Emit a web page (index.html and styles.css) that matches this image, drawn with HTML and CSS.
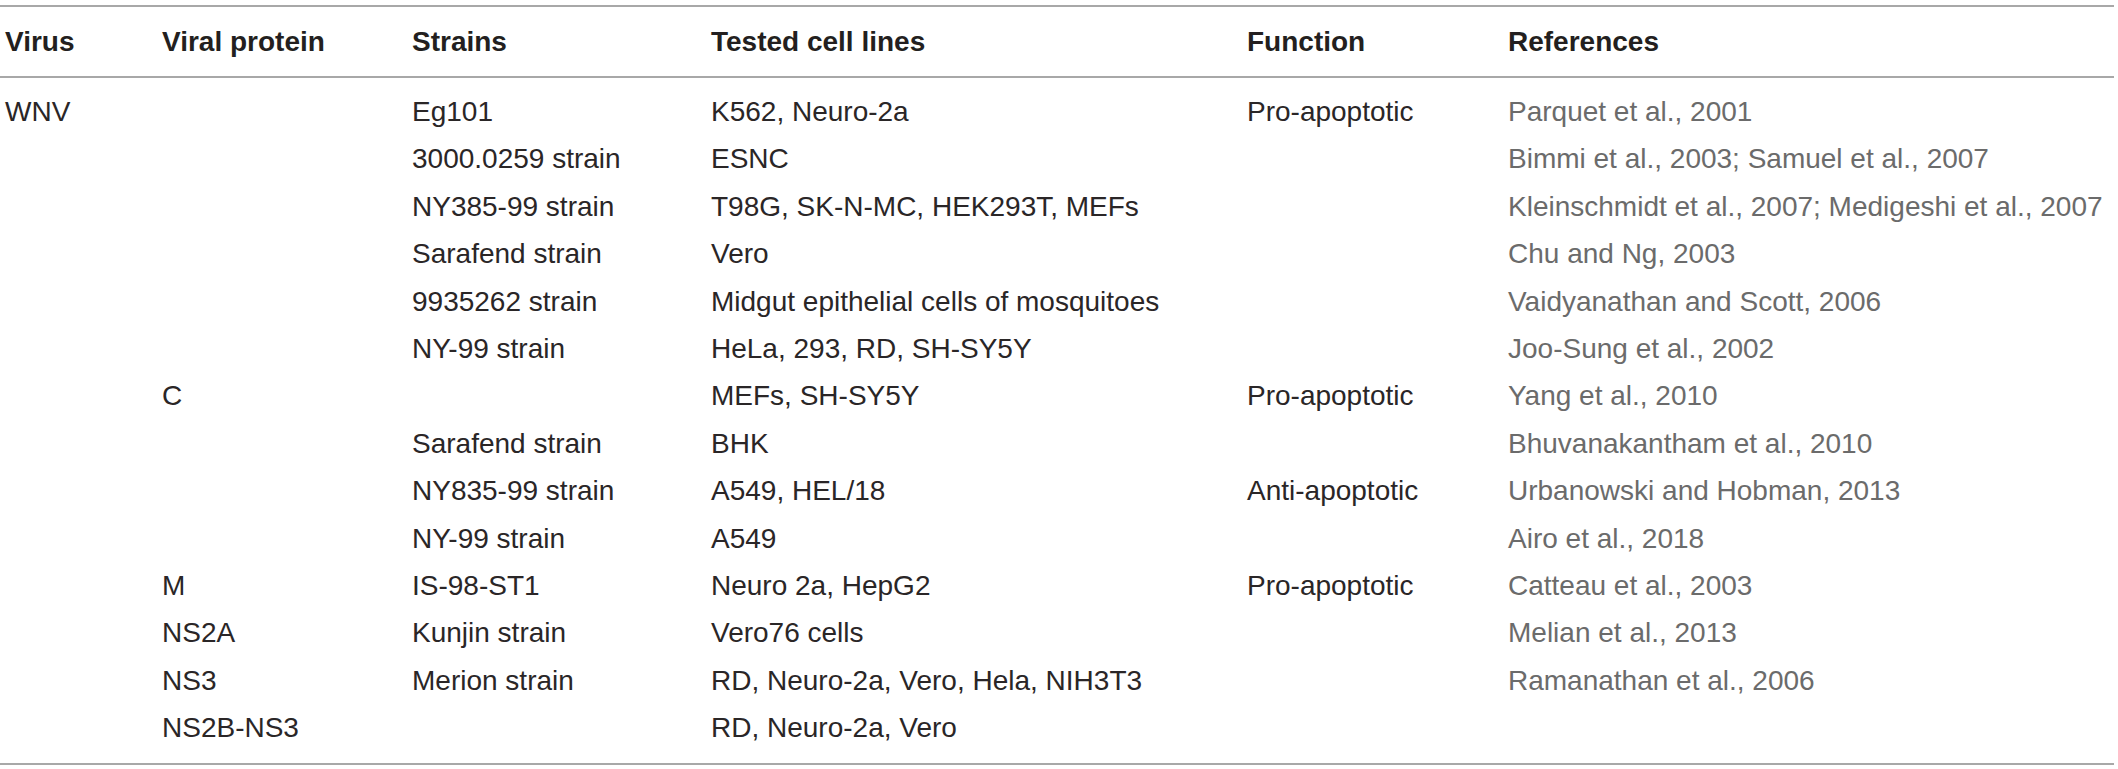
FILE: index.html
```html
<!DOCTYPE html>
<html>
<head>
<meta charset="utf-8">
<link rel="stylesheet" href="styles.css">
</head>
<body>
<table class="tbl">
  <colgroup>
    <col class="c1"><col class="c2"><col class="c3"><col class="c4"><col class="c5"><col class="c6">
  </colgroup>
  <thead>
    <tr><th>Virus</th><th>Viral protein</th><th>Strains</th><th>Tested cell lines</th><th>Function</th><th>References</th></tr>
  </thead>
  <tbody>
    <tr class="first"><td>WNV</td><td></td><td>Eg101</td><td>K562, Neuro-2a</td><td>Pro-apoptotic</td><td class="ref">Parquet et al., 2001</td></tr>
    <tr><td></td><td></td><td>3000.0259 strain</td><td>ESNC</td><td></td><td class="ref">Bimmi et al., 2003; Samuel et al., 2007</td></tr>
    <tr><td></td><td></td><td>NY385-99 strain</td><td>T98G, SK-N-MC, HEK293T, MEFs</td><td></td><td class="ref">Kleinschmidt et al., 2007; Medigeshi et al., 2007</td></tr>
    <tr><td></td><td></td><td>Sarafend strain</td><td>Vero</td><td></td><td class="ref">Chu and Ng, 2003</td></tr>
    <tr><td></td><td></td><td>9935262 strain</td><td>Midgut epithelial cells of mosquitoes</td><td></td><td class="ref">Vaidyanathan and Scott, 2006</td></tr>
    <tr><td></td><td></td><td>NY-99 strain</td><td>HeLa, 293, RD, SH-SY5Y</td><td></td><td class="ref">Joo-Sung et al., 2002</td></tr>
    <tr><td></td><td>C</td><td></td><td>MEFs, SH-SY5Y</td><td>Pro-apoptotic</td><td class="ref">Yang et al., 2010</td></tr>
    <tr><td></td><td></td><td>Sarafend strain</td><td>BHK</td><td></td><td class="ref">Bhuvanakantham et al., 2010</td></tr>
    <tr><td></td><td></td><td>NY835-99 strain</td><td>A549, HEL/18</td><td>Anti-apoptotic</td><td class="ref">Urbanowski and Hobman, 2013</td></tr>
    <tr><td></td><td></td><td>NY-99 strain</td><td>A549</td><td></td><td class="ref">Airo et al., 2018</td></tr>
    <tr><td></td><td>M</td><td>IS-98-ST1</td><td>Neuro 2a, HepG2</td><td>Pro-apoptotic</td><td class="ref">Catteau et al., 2003</td></tr>
    <tr><td></td><td>NS2A</td><td>Kunjin strain</td><td>Vero76 cells</td><td></td><td class="ref">Melian et al., 2013</td></tr>
    <tr><td></td><td>NS3</td><td>Merion strain</td><td>RD, Neuro-2a, Vero, Hela, NIH3T3</td><td></td><td class="ref">Ramanathan et al., 2006</td></tr>
    <tr class="last"><td></td><td>NS2B-NS3</td><td></td><td>RD, Neuro-2a, Vero</td><td></td><td class="ref"></td></tr>
  </tbody>
</table>
</body>
</html>
```
FILE: styles.css
```css
html, body {
  margin: 0;
  padding: 0;
  background: #ffffff;
}
body {
  padding-top: 5px;
  font-family: "Liberation Sans", Arial, sans-serif;
  color: #231f20;
}
.tbl {
  width: 2114px;
  border-collapse: collapse;
  table-layout: fixed;
  border-top: 2px solid #a8a8a8;
  border-bottom: 2px solid #a8a8a8;
}
.c1 { width: 157px; }
.c2 { width: 250px; }
.c3 { width: 299px; }
.c4 { width: 536px; }
.c5 { width: 261px; }
.c6 { width: 611px; }
.tbl th {
  height: 69px;
  padding: 0 0 0 5px;
  text-align: left;
  vertical-align: middle;
  font-size: 28px;
  font-weight: bold;
  color: #231f20;
  border-bottom: 2px solid #a8a8a8;
  white-space: nowrap;
}
.tbl td {
  padding: 0 0 0 5px;
  font-size: 28px;
  line-height: 47.4px;
  white-space: nowrap;
  vertical-align: top;
  color: #2a2627;
}
.tbl tr.first td { padding-top: 10px; }
.tbl tr.last td { padding-bottom: 11px; }
.tbl td.ref { color: #6b6b6b; }
```
